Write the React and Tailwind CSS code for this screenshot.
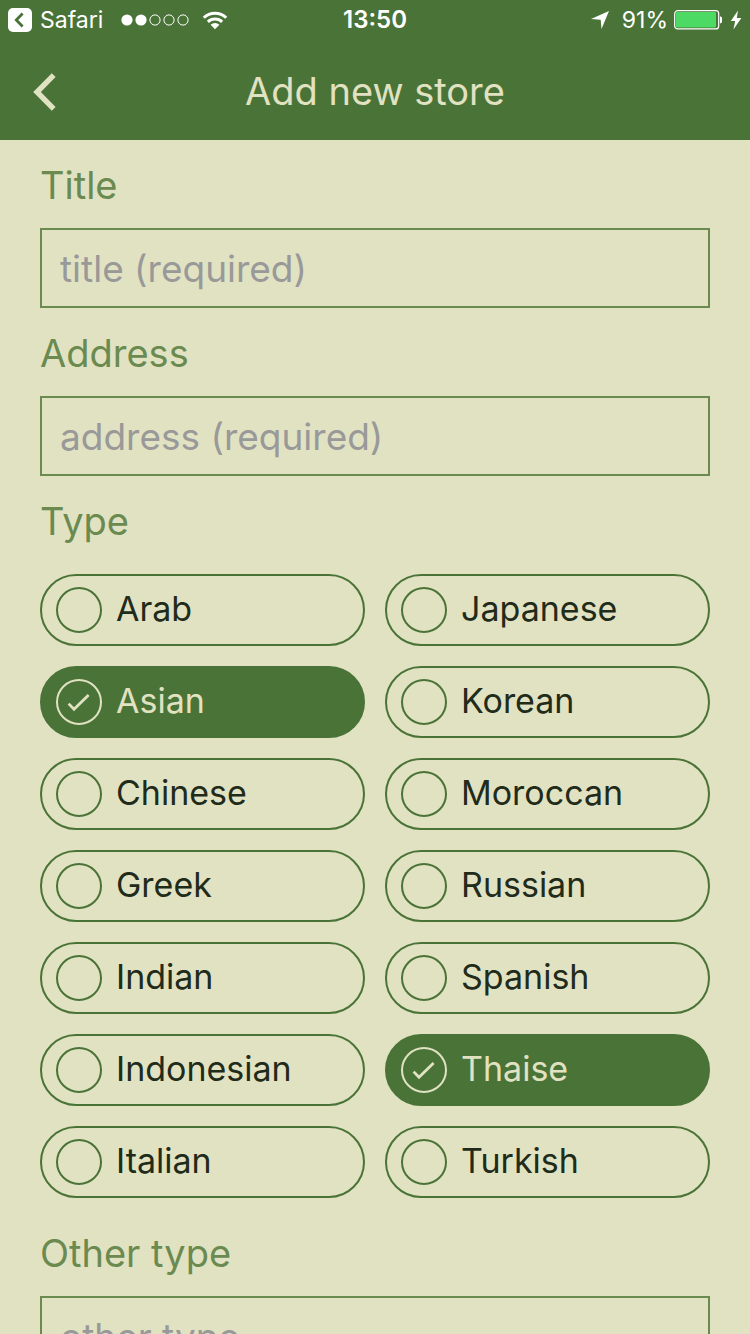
import { useState } from "react";

const STORE_TYPES = [
  "Arab", "Asian", "Chinese", "Greek", "Indian", "Indonesian", "Italian",
  "Japanese", "Korean", "Moroccan", "Russian", "Spanish", "Thaise", "Turkish",
];

function StatusBar() {
  return (
    <div className="grid h-10 grid-cols-[1fr_auto_1fr] items-center px-2 text-[23px] leading-10 text-white">
      <div className="flex items-center">
        <a href="#safari" className="flex items-center gap-2">
          <svg width="24" height="24" viewBox="0 0 24 24" aria-hidden="true">
            <rect width="24" height="24" rx="5" fill="#fff" />
            <path d="M14.6 5.5 8.3 12l6.3 6.5" fill="none" stroke="#4a7337" strokeWidth="2.8" />
          </svg>
          <span>Safari</span>
        </a>
        <svg className="ml-[18px]" width="68" height="12" viewBox="0 0 68 12" aria-label="Signal">
          <g fill="#fff">
            <circle cx="6" cy="6" r="5.6" />
            <circle cx="20" cy="6" r="5.6" />
          </g>
          <g fill="none" stroke="#fff">
            <circle cx="34" cy="6" r="5.1" />
            <circle cx="48" cy="6" r="5.1" />
            <circle cx="62" cy="6" r="5.1" />
          </g>
        </svg>
        <svg className="ml-3" width="28" height="20" viewBox="0 0 28 20" aria-label="Wi-Fi">
          <g fill="none" stroke="#fff" strokeWidth="3">
            <path d="M2.8 7.7a16 16 0 0 1 22.4 0" />
            <path d="M6.9 11.9a10.2 10.2 0 0 1 14.2 0" />
          </g>
          <path d="M9.6 14.8a6.3 6.3 0 0 1 8.8 0L14 19.3Z" fill="#fff" />
        </svg>
      </div>
      <time className="text-2xl font-semibold">13:50</time>
      <div className="flex items-center justify-end">
        <svg width="20" height="20" viewBox="0 0 20 20" aria-label="Location">
          <path d="M19 1 11.5 19l-.8-9.2L1 9Z" fill="#fff" />
        </svg>
        <span className="ml-3">91%</span>
        <svg className="ml-1" width="50" height="20" viewBox="0 0 50 20" aria-label="Battery">
          <rect x="2.7" y="0.7" width="44" height="18.2" rx="3" fill="none" stroke="#fff" strokeWidth="1.2" />
          <rect x="4" y="2" width="40" height="15.6" rx="1" fill="#4cd964" />
          <path d="M48 6.3c4 1.2 4 6 0 7.2Z" fill="#fff" />
        </svg>
        <svg className="ml-2" width="12" height="20" viewBox="0 0 12 20" aria-label="Charging">
          <path d="M8 .5.8 11h4.4L3.4 19.5 11.4 8H6.8Z" fill="#fff" />
        </svg>
      </div>
    </div>
  );
}

function Field({ id, label, placeholder }) {
  return (
    <div>
      <label htmlFor={id} className="flex h-22 items-center pt-0.5 text-[38px] text-[#6a8a50]">
        {label}
      </label>
      <input
        id={id}
        type="text"
        placeholder={placeholder}
        className="block h-20 w-full border-2 border-[#6a8a50] bg-transparent px-[18px] text-[37px] text-[#212b1a] outline-none placeholder:text-[#999999]"
      />
    </div>
  );
}

function TypeOption({ name, checked, onToggle }) {
  return (
    <label
      className={`flex h-18 cursor-pointer items-center gap-3.5 rounded-full border-2 border-[#4a7337] px-3.5 text-[34px] ${
        checked ? "bg-[#4a7337] text-[#e1e2c2]" : "text-[#212b1a]"
      }`}
    >
      <span className="grid shrink-0 place-items-center">
        <input
          type="checkbox"
          checked={checked}
          onChange={onToggle}
          className="col-start-1 row-start-1 size-[46px] appearance-none rounded-full border-2 border-[#4a7337] checked:border-[#e1e2c2]"
        />
        {checked && (
          <svg className="pointer-events-none col-start-1 row-start-1" width="46" height="46" viewBox="0 0 46 46" aria-hidden="true">
            <path d="M12.6 24.6 18 30.2 32.6 16" fill="none" stroke="#e1e2c2" strokeWidth="2.8" />
          </svg>
        )}
      </span>
      <span className="pb-1">{name}</span>
    </label>
  );
}

export default function App() {
  const [selected, setSelected] = useState(["Asian", "Thaise"]);
  const toggle = (name) =>
    setSelected((current) =>
      current.includes(name) ? current.filter((n) => n !== name) : [...current, name]
    );

  return (
    <div className="flex h-screen flex-col bg-[#e1e2c2] font-['Inter','Liberation_Sans',sans-serif]">
      <header className="shrink-0 bg-[#4a7337]">
        <StatusBar />
        <div className="grid h-25 grid-cols-[1fr_auto_1fr] items-center px-8 pt-1">
          <button type="button" aria-label="Back" className="justify-self-start">
            <svg width="24" height="38" viewBox="0 0 24 38" aria-hidden="true">
              <path d="M21.7 2.2 5 19l16.7 16.8" fill="none" stroke="#e1e2c2" strokeWidth="5.4" />
            </svg>
          </button>
          <h1 className="pb-0.5 text-[38px] text-[#e1e2c2]">Add new store</h1>
        </div>
      </header>
      <main className="min-h-0 flex-1 overflow-y-auto px-10 pb-10 [scrollbar-width:none]">
        <form>
          <Field id="title" label="Title" placeholder="title (required)" />
          <Field id="address" label="Address" placeholder="address (required)" />
          <fieldset>
            <legend className="flex h-22 items-center pt-0.5 text-[38px] text-[#6a8a50]">Type</legend>
            <div className="grid grid-flow-col grid-cols-2 grid-rows-7 gap-5 py-2.5">
              {STORE_TYPES.map((name) => (
                <TypeOption
                  key={name}
                  name={name}
                  checked={selected.includes(name)}
                  onToggle={() => toggle(name)}
                />
              ))}
            </div>
          </fieldset>
          <Field id="other-type" label="Other type" placeholder="other type" />
        </form>
      </main>
    </div>
  );
}
